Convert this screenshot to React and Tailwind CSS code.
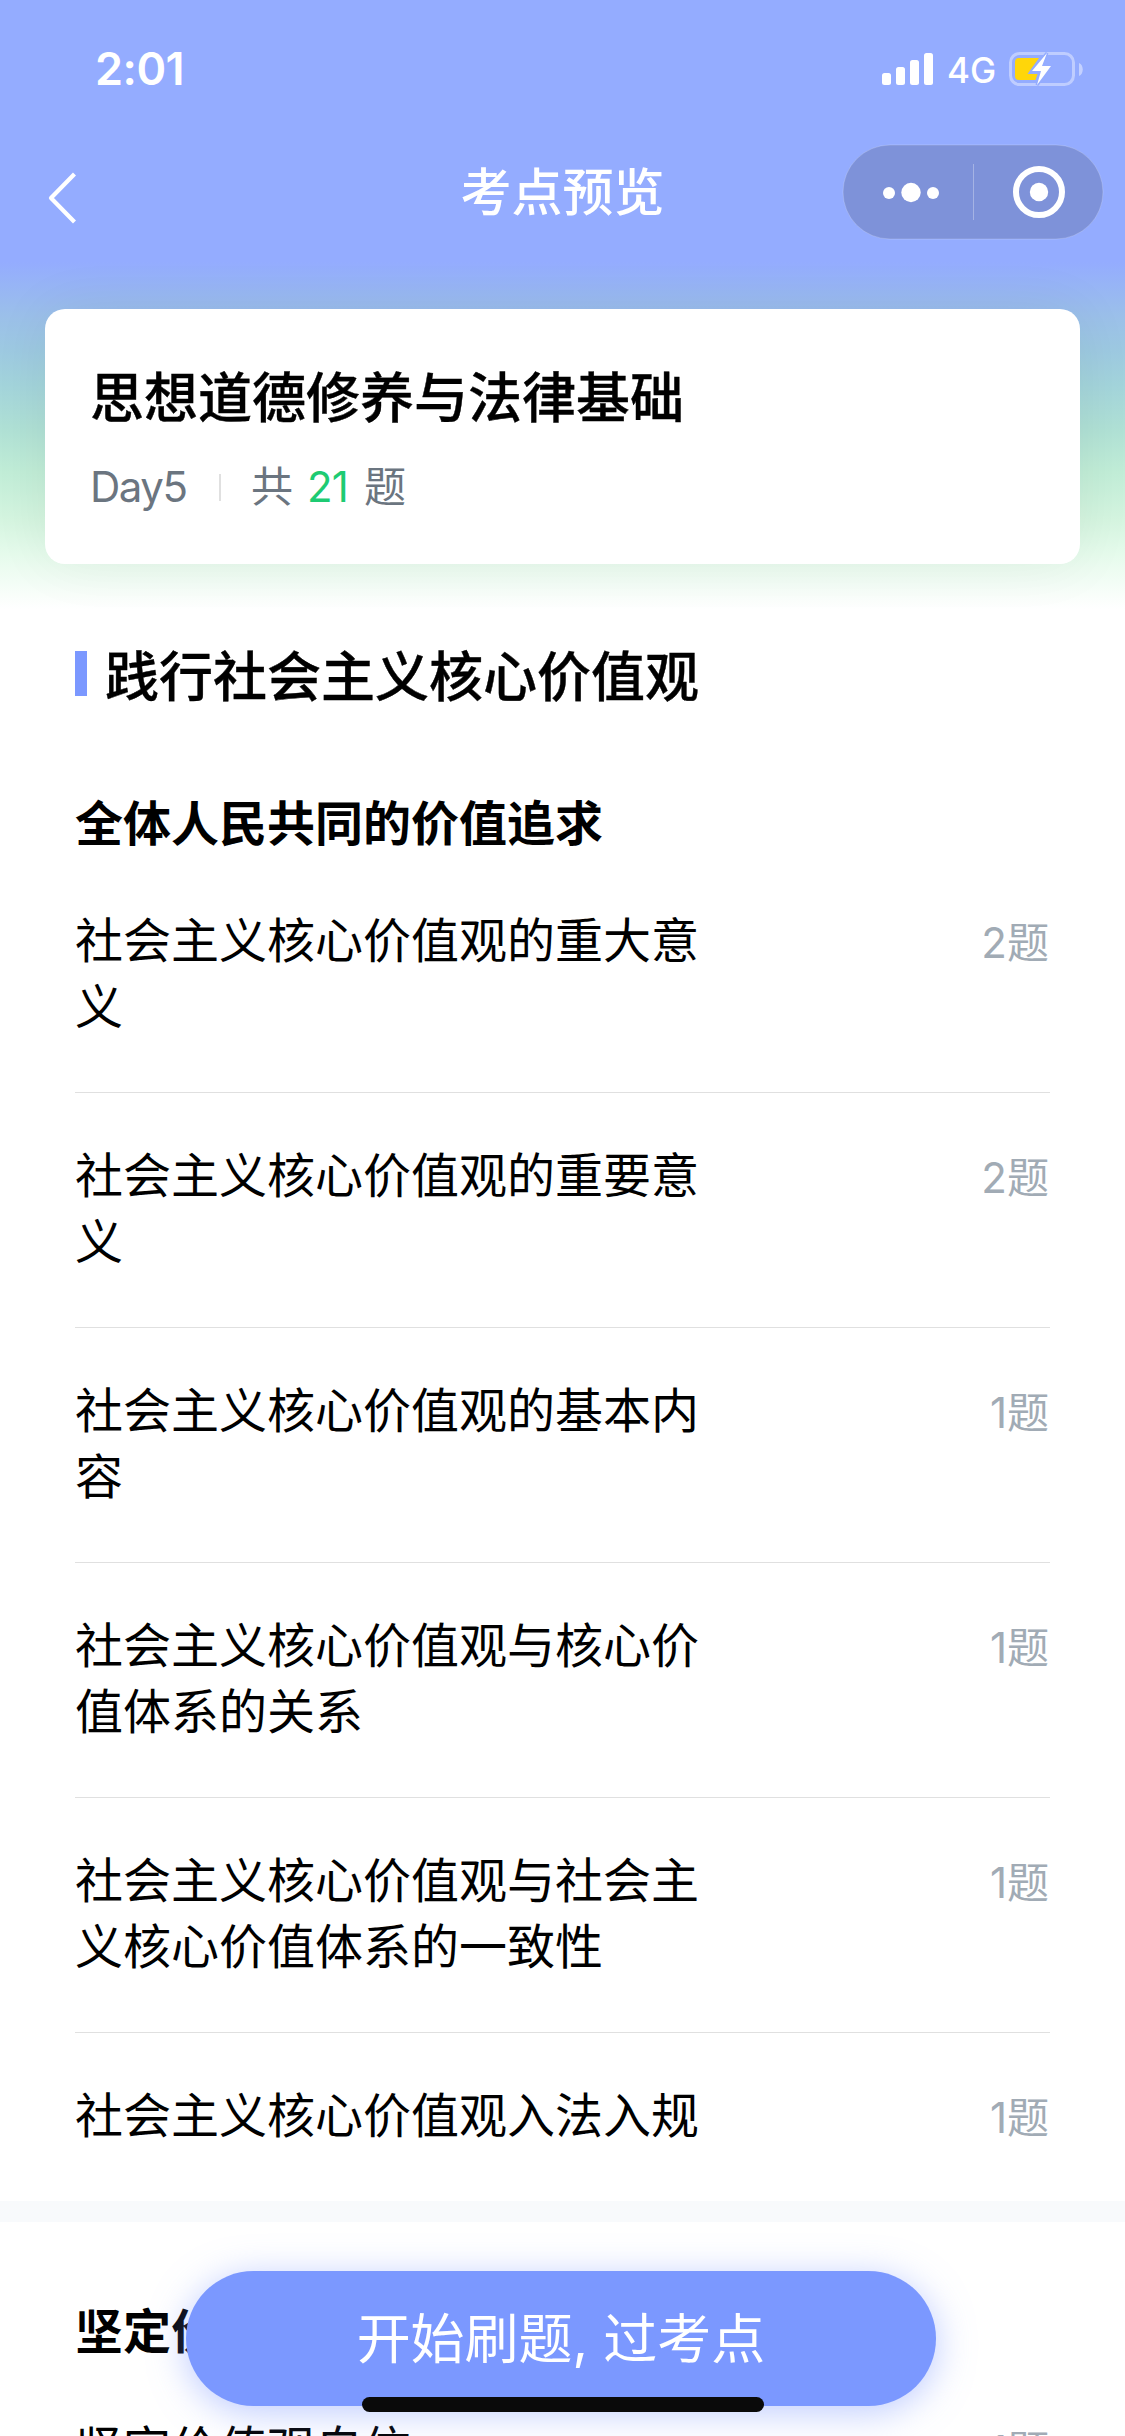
import clsx from 'clsx'

const sections = [
  {
    title: '全体人民共同的价值追求',
    items: [
      { name: '社会主义核心价值观的重大意义', count: 2 },
      { name: '社会主义核心价值观的重要意义', count: 2 },
      { name: '社会主义核心价值观的基本内容', count: 1 },
      { name: '社会主义核心价值观与核心价值体系的关系', count: 1 },
      { name: '社会主义核心价值观与社会主义核心价值体系的一致性', count: 1 },
      { name: '社会主义核心价值观入法入规', count: 1 },
    ],
  },
  {
    title: '坚定价值观自信',
    items: [{ name: '坚定价值观自信', count: 1 }],
  },
]

function StatusBar() {
  return (
    <div className="flex h-[138px] items-start justify-between pl-[95px] pr-[42px] text-white">
      <span className="mt-[41px] text-[45px] font-semibold leading-[56px] tracking-[-0.5px]">2:01</span>
      <div className="mt-[51px] flex items-start">
        <svg className="mt-[2px] h-[32px] w-[52px]" viewBox="0 0 52 32" fill="currentColor">
          <rect x="0" y="20" width="9" height="12" rx="2.5" />
          <rect x="14" y="14" width="9" height="18" rx="2.5" />
          <rect x="28" y="7" width="9" height="25" rx="2.5" />
          <rect x="42" y="0" width="9" height="32" rx="2.5" />
        </svg>
        <span className="ml-[13px] w-[62px] text-[35px] font-[450] leading-[39px]">4G</span>
        <svg className="h-[36px] w-[74px]" viewBox="0 0 74 36">
          <rect x="1.5" y="2.5" width="63" height="31" rx="9" fill="none" stroke="#fff" strokeOpacity="0.4" strokeWidth="3" />
          <path d="M70 12c5 2 5 11 0 13z" fill="#fff" fillOpacity="0.45" />
          <path d="M10 7h20l-11.500 16h10l-2 6H10a4 4 0 0 1-4-4V11a4 4 0 0 1 4-4z" fill="#ffd60a" />
          <path d="M38 2L23 20h9l-4 14 14-19h-9z" fill="#fff" stroke="#94acff" strokeWidth="3" paintOrder="stroke" />
        </svg>
      </div>
    </div>
  )
}

function NavBar() {
  return (
    <div className="grid grid-cols-3 items-center text-white">
      <svg className="ml-[46px] mt-[12px] h-[54px] w-[34px]" viewBox="0 0 34 54" fill="none" stroke="currentColor" strokeWidth="4.2">
        <path d="M28.500 3L5 27l23.500 24" strokeLinejoin="round" />
      </svg>
      <h1 className="pt-[2px] text-center text-[51px] font-medium leading-[106px]">考点预览</h1>
      <svg className="ml-auto mr-[21px] h-[96px] w-[262px]" viewBox="0 0 262 96">
        <rect x="1" y="1" width="260" height="94" rx="47" fill="#000" fillOpacity="0.15" stroke="#fff" strokeOpacity="0.2" />
        <g fill="#fff">
          <circle cx="47" cy="49" r="6" />
          <circle cx="69" cy="48.500" r="9.700" />
          <circle cx="91" cy="49" r="6" />
          <rect x="131" y="20" width="1" height="56" fillOpacity="0.3" />
          <circle cx="197" cy="48" r="9.200" />
        </g>
        <circle cx="197" cy="48" r="23" fill="none" stroke="#fff" strokeWidth="6" />
      </svg>
    </div>
  )
}

function TopicRow({ item, last }) {
  return (
    <li
      className={clsx(
        'flex justify-between pt-[50px] pb-[52px]',
        !last && 'border-b border-[#e0e0e0]'
      )}
    >
      <span className="w-[624px] text-[48px] leading-[66px] text-black">{item.name}</span>
      <span className="mt-[2px] -mb-[2px] mr-[1px] text-[42px] leading-[66px] text-[#a1abb5]">{item.count}题</span>
    </li>
  )
}

function Section({ section }) {
  return (
    <section className="px-[75px]">
      <h3 className="text-[48px] font-bold leading-[68px] text-black">{section.title}</h3>
      <ul>
        {section.items.map((item, i) => (
          <TopicRow key={item.name} item={item} last={i === section.items.length - 1} />
        ))}
      </ul>
    </section>
  )
}

export default function App() {
  return (
    <div className="relative h-[2436px] w-[1125px] overflow-hidden bg-white font-[Inter,'Noto_Sans_CJK_SC',sans-serif]">
      {/* Header */}
      <header className="h-[609px] bg-[linear-gradient(180deg,#94acff_262px,#9bc0e9_317px,#9dc9e1_350px,#a3d4db_385px,#b0e1d5_430px,#c1edd7_472px,#d5f5e0_520px,#e6fbec_555px,#ffffff_609px)]">
        <StatusBar />
        <NavBar />
        <div className="mx-[45px] mt-[63px] h-[255px] rounded-[20px] bg-white px-[45px] pt-[51px] shadow-[0_0_60px_rgba(0,0,0,0.06)]">
          <h2 className="text-[54px] font-medium leading-[78px] text-black [-webkit-text-stroke:0.4px_black]">思想道德修养与法律基础</h2>
          <div className="mt-[19px] flex items-center text-[42px] leading-[60px] text-[#6b7580]">
            <span className="w-[98px] tracking-[-1.5px]">Day5</span>
            <span className="ml-[31px] mr-[30px] h-[27px] w-[2px] bg-[#e0e0e0]" />
            <span>共</span>
            <span className="ml-[14px] mr-[16px] w-[41px] tracking-[-1px] text-[#1ecb73]">21</span>
            <span>题</span>
          </div>
        </div>
      </header>

      {/* Topic list */}
      <main>
        <div className="flex items-center px-[75px] pt-[30px]">
          <span className="-mt-[9px] h-[45px] w-[12px] bg-[#7b98ff]" />
          <h2 className="ml-[18px] text-[54px] font-medium leading-[78px] text-black [-webkit-text-stroke:0.4px_black]">践行社会主义核心价值观</h2>
        </div>
        <div className="mt-[73px]">
          <Section section={sections[0]} />
        </div>
        <div className="mb-[76px] h-[21px] bg-[#f8fafc]" />
        <Section section={sections[1]} />
      </main>

      {/* Floating start button */}
      <button className="absolute left-[186px] top-[2271px] h-[135px] w-[750px] rounded-full bg-[#7b98ff] pt-[2px] text-[54px] font-normal text-white shadow-[0_6px_36px_rgba(123,152,255,0.5)]">
        开始刷题, 过考点
      </button>
      <div className="absolute left-[362px] top-[2397px] h-[15px] w-[402px] rounded-full bg-[#0a0a0a]" />
    </div>
  )
}
